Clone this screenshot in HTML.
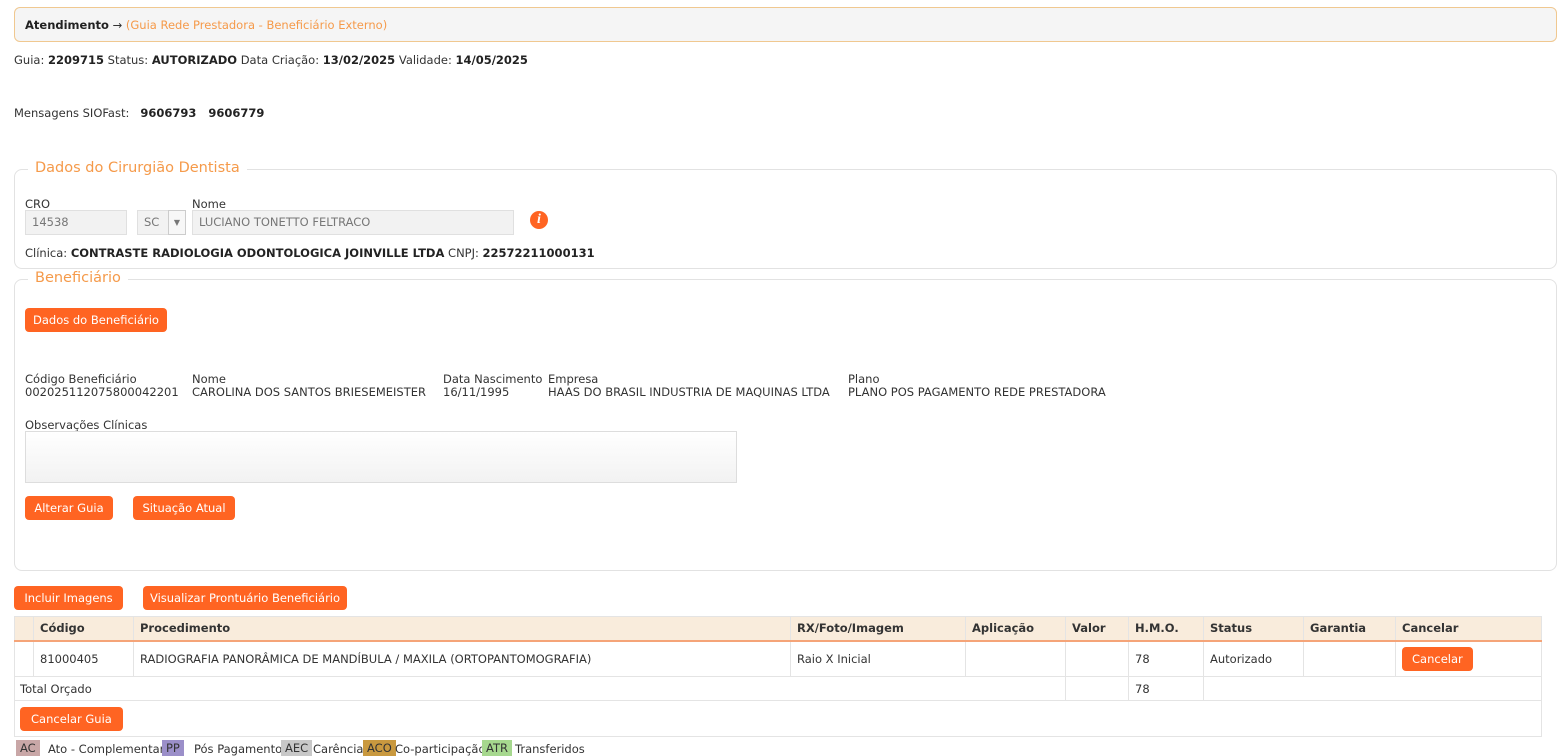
<!DOCTYPE html>
<html><head><meta charset="utf-8"><style>
*{box-sizing:border-box;margin:0;padding:0}
body{width:1565px;height:753px;overflow:hidden;background:#fff;font-family:"DejaVu Sans",Tahoma,sans-serif;font-size:11.5px;color:#333;position:relative}
.a{position:absolute;white-space:nowrap}
b{color:#222}
.btn{position:absolute;background:#ff6422;color:#fff;border-radius:4px;height:24px;line-height:24px;text-align:center;font-size:11.5px}
.box{position:absolute;border:1px solid #e2e2e2;border-radius:8px}
.leg{position:absolute;top:740px;height:16px;line-height:16px;padding:0 4px;color:#333}
.inp{position:absolute;background:#f2f2f2;border:1px solid #e0e0e0;color:#777;height:25px;line-height:23px;padding-left:6px}
table{position:absolute;left:14px;top:616px;width:1528px;border-collapse:collapse;table-layout:fixed}
td,th{border:1px solid #e4e4e4;padding:0 6px;text-align:left;font-size:11.5px;white-space:nowrap;overflow:hidden}
th{background:#f9ecdc;height:24px;border-bottom:2px solid #f5a478;color:#333}
</style></head><body>
<div class="a" style="left:14px;top:7px;width:1543px;height:35px;background:#f5f5f5;border:1px solid #f0c890;border-radius:6px;padding:10px 10px"><b>Atendimento</b> → <span style="color:#f59a4a">(Guia Rede Prestadora - Beneficiário Externo)</span></div>
<div class="a" style="left:14px;top:53px">Guia: <b>2209715</b> Status: <b>AUTORIZADO</b> Data Criação: <b>13/02/2025</b> Validade: <b>14/05/2025</b></div>
<div class="a" style="left:14px;top:106px">Mensagens SIOFast: &nbsp; <b>9606793 &nbsp; 9606779</b></div>

<div class="box" style="left:14px;top:169px;width:1543px;height:100px"></div>
<div class="a" style="left:28px;top:160px;background:#fff;padding:0 7px;color:#f59a4a;font-size:14.5px">Dados do Cirurgião Dentista</div>
<div class="a" style="left:25px;top:197px">CRO</div>
<div class="a" style="left:192px;top:197px">Nome</div>
<div class="inp" style="left:25px;top:210px;width:102px">14538</div>
<div class="inp" style="left:137px;top:210px;width:32px">SC</div>
<div class="a" style="left:168px;top:210px;width:18px;height:25px;border:1px solid #ccc;background:#f7f7f7;text-align:center;line-height:23px;font-size:8px;color:#777">▼</div>
<div class="inp" style="left:192px;top:210px;width:322px">LUCIANO TONETTO FELTRACO</div>
<div class="a" style="left:530px;top:211px;width:18px;height:18px;border-radius:50%;background:#ff6422;color:#fff;text-align:center;line-height:18px;font-weight:bold;font-style:italic;font-family:'Liberation Serif',serif;font-size:14px">i</div>
<div class="a" style="left:25px;top:246px">Clínica: <b>CONTRASTE RADIOLOGIA ODONTOLOGICA JOINVILLE LTDA</b> CNPJ: <b>22572211000131</b></div>

<div class="box" style="left:14px;top:279px;width:1543px;height:292px"></div>
<div class="a" style="left:28px;top:270px;background:#fff;padding:0 7px;color:#f59a4a;font-size:14.5px">Beneficiário</div>
<div class="btn" style="left:25px;top:308px;width:142px">Dados do Beneficiário</div>
<div class="a" style="left:25px;top:373px;line-height:13px">Código Beneficiário<br>002025112075800042201</div>
<div class="a" style="left:192px;top:373px;line-height:13px">Nome<br>CAROLINA DOS SANTOS BRIESEMEISTER</div>
<div class="a" style="left:443px;top:373px;line-height:13px">Data Nascimento<br>16/11/1995</div>
<div class="a" style="left:548px;top:373px;line-height:13px">Empresa<br>HAAS DO BRASIL INDUSTRIA DE MAQUINAS LTDA</div>
<div class="a" style="left:848px;top:373px;line-height:13px">Plano<br>PLANO POS PAGAMENTO REDE PRESTADORA</div>
<div class="a" style="left:25px;top:418px">Observações Clínicas</div>
<div class="a" style="left:25px;top:431px;width:712px;height:52px;border:1px solid #ddd;background:linear-gradient(#fff,#f2f2f2)"></div>
<div class="btn" style="left:25px;top:496px;width:88px">Alterar Guia</div>
<div class="btn" style="left:133px;top:496px;width:102px">Situação Atual</div>

<div class="btn" style="left:14px;top:586px;width:109px">Incluir Imagens</div>
<div class="btn" style="left:143px;top:586px;width:204px">Visualizar Prontuário Beneficiário</div>

<table>
<colgroup><col style="width:19px"><col style="width:100px"><col style="width:657px"><col style="width:175px"><col style="width:100px"><col style="width:63px"><col style="width:75px"><col style="width:100px"><col style="width:92px"><col></colgroup>
<tr><th></th><th>Código</th><th>Procedimento</th><th>RX/Foto/Imagem</th><th>Aplicação</th><th>Valor</th><th>H.M.O.</th><th>Status</th><th>Garantia</th><th>Cancelar</th></tr>
<tr style="height:36px"><td></td><td>81000405</td><td>RADIOGRAFIA PANORÂMICA DE MANDÍBULA / MAXILA (ORTOPANTOMOGRAFIA)</td><td>Raio X Inicial</td><td></td><td></td><td>78</td><td>Autorizado</td><td></td><td><span style="display:inline-block;background:#ff6422;color:#fff;border-radius:4px;height:24px;line-height:24px;padding:0 10px">Cancelar</span></td></tr>
<tr style="height:24px"><td colspan="5" style="padding-left:5px">Total Orçado</td><td></td><td>78</td><td colspan="3"></td></tr>
<tr style="height:36px"><td colspan="10" style="padding-left:5px"><span style="display:inline-block;background:#ff6422;color:#fff;border-radius:4px;height:24px;line-height:24px;padding:0 11px">Cancelar Guia</span></td></tr>
</table>

<div class="leg" style="left:16px;background:#c9a7a7">AC</div><div class="a" style="left:48px;top:742px">Ato - Complementar</div>
<div class="leg" style="left:162px;background:#9b8fc9">PP</div><div class="a" style="left:194px;top:742px">Pós Pagamento</div>
<div class="leg" style="left:281px;background:#c8c8c8">AEC</div><div class="a" style="left:313px;top:742px">Carência</div>
<div class="leg" style="left:363px;background:#c9993f">ACO</div><div class="a" style="left:395px;top:742px">Co-participação</div>
<div class="leg" style="left:482px;background:#a6d88e">ATR</div><div class="a" style="left:515px;top:742px">Transferidos</div>
</body></html>
